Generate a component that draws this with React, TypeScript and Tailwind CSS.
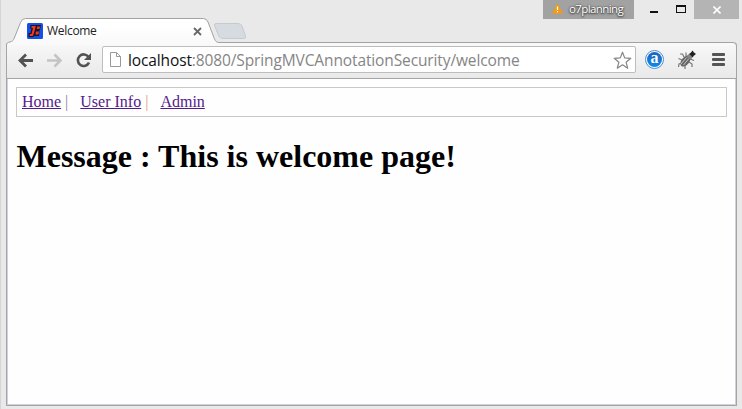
const UI = "font-['Open_Sans','Noto_Sans',sans-serif]";

function TabStrip() {
  return (
    <header className="relative z-10 flex h-[42px] shrink-0 items-start">
      <svg className="pointer-events-none absolute left-0 top-0" width="742" height="46" viewBox="0 0 742 46" fill="none">
        <defs>
          <linearGradient id="tab" x1="0" y1="18" x2="0" y2="46" gradientUnits="userSpaceOnUse">
            <stop offset="0.3" stopColor="#ffffff" />
            <stop offset="1" stopColor="#f8f8f8" />
          </linearGradient>
        </defs>
        <path d="M216 23.5H238Q241 23.5 242 26L245.5 36Q246.500 38.500 243.500 38.500H223Q220 38.500 218.800 36L214.500 25.500Q214 23.500 216 23.500Z" fill="#d6dae1" stroke="#c6c9ce" />
        <path d="M6.500 46V45C6.500 43 8 42.300 10 42C12.500 41.500 13.500 40 14.300 38L20.500 22.500Q22 18.500 25.500 18.500H203.500Q206.500 18.500 208 22L214.300 38.500C215.300 41 216.500 42.500 219 42.500H733Q736.500 42.500 736.500 46" fill="url(#tab)" stroke="#a2a2a2" />
      </svg>
      <div className="relative mt-[19px] flex h-6 w-[204px] items-center pl-[27px]">
        <svg className="shrink-0" width="16" height="16" viewBox="0 0 16 16">
          <rect width="16" height="16" rx="1.500" fill="#1451e6" />
          <path d="M3.500 2H14L13 7H12.500L12 13H7L6.500 14H1.500V10H3.500L4.500 5.500H3Z" fill="#15142e" />
          <path d="M4.500 3H8.800L7 10L5.800 13H2.500L3 11H4.500L6 5H4.500ZM10.200 3.500H13L12.500 6H9.700ZM9 8.500H12L11.400 11.500H8.400Z" fill="#f5391a" />
        </svg>
        <span className={`${UI} ml-1 text-[12px] leading-4 tracking-[-0.300px] text-[#222]`}>Welcome</span>
        <svg className="absolute left-[193px] top-[7.500px]" width="9" height="9" viewBox="0 0 9 9">
          <path d="M1 1L8 8M8 1L1 8" stroke="#686868" strokeWidth="1.800" />
        </svg>
      </div>
      <div className="relative ml-auto flex h-[19px] items-center pr-[3px]">
        <div className="flex h-[19px] w-[91px] items-center bg-[#a2a2a2] pl-[9px]">
          <svg width="11" height="11" viewBox="0 0 11 11" className="-mt-[3px]">
            <path d="M5.500 0.500L11 10.500H0Z" fill="#f39a10" />
            <path d="M5.500 3.500V7M5.500 8V9.300" stroke="#fff" strokeWidth="1.200" />
          </svg>
          <span className={`${UI} -mt-px ml-[6px] text-[11.500px] leading-4 tracking-[-0.600px] text-white [text-shadow:0_0_2px_#333,0_1px_2px_#333]`}>o7planning</span>
        </div>
        <svg width="60" height="19" viewBox="0 0 60 19">
          <path d="M16 11H24V13H16Z" fill="#111" />
          <path d="M42 5H52V13H42ZM43 7V12H51V7Z" fill="#111" fillRule="evenodd" />
        </svg>
        <div className="flex h-[19px] w-[45px] items-center justify-center bg-[#b4b4b4]">
          <svg width="8" height="8" viewBox="0 0 8 8"><path d="M.5 .5L7.500 7.500M7.500 .5L.5 7.500" stroke="#fff" strokeWidth="1.600" /></svg>
        </div>
      </div>
    </header>
  );
}

function Toolbar() {
  return (
    <div className="relative ml-[6px] mr-[5px] flex h-[37px] shrink-0 items-center rounded-t-[4px] border-x border-b border-[#a5a5a5] bg-linear-to-b from-[#f8f8f8] to-[#e9e9e9] pb-px pl-[11px]">
      <svg className="shrink-0" width="84" height="36" viewBox="18 42 84 36" fill="none">
        <path d="M33 60.500H20M26 54.500L20 60.500L26 66.500" stroke="#525252" strokeWidth="2.800" />
        <path d="M47 60.500H60M54.500 54.500L60.500 60.500L54.500 66.500" stroke="#c4c4c4" strokeWidth="2.500" />
        <path d="M88.500 57A5.800 5.800 0 1 0 89 62.500" stroke="#525252" strokeWidth="2.600" />
        <path d="M91 53V60H84Z" fill="#525252" />
      </svg>
      <div className="flex h-[27px] w-[534px] shrink-0 items-center rounded-[2px] border border-[#bdbdbd] bg-white pl-[7px]">
        <svg className="shrink-0" width="11" height="15" viewBox="0 0 11 15" fill="none">
          <path d="M.5 .5H6.500L10.500 4.500V14.500H.5ZM6.500 .5V4.500H10.500" stroke="#999" />
        </svg>
        <span className={`${UI} ml-[7px] whitespace-nowrap text-[15.500px] leading-5 tracking-[-0.120px] text-[#858585]`}>
          <span className="text-[#111]">localhost</span>:8080/SpringMVCAnnotationSecurity/welcome
        </span>
        <svg className="ml-auto mr-[3px] mt-px shrink-0" width="19" height="19" viewBox="0 0 19 19" fill="none">
          <path d="M9.500 1.200L11.700 6.900L17.800 7.300L13.100 11.200L14.700 17.200L9.500 13.800L4.300 17.200L5.900 11.200L1.200 7.300L7.300 6.900Z" stroke="#858585" strokeWidth="1.200" strokeLinejoin="round" />
        </svg>
      </div>
      <div className="ml-[9px] flex size-[19px] shrink-0 items-center justify-center rounded-full border border-[#4a8fd0] bg-white">
        <div className="flex size-[15px] items-center justify-center rounded-full bg-linear-to-b from-[#1f62b8] to-[#0a8af0] font-['Liberation_Serif',serif] text-[16px] font-bold leading-none text-white"><span className="-mt-[3px]">a</span></div>
      </div>
      <svg className="ml-[13px] shrink-0" width="20" height="20" viewBox="0 0 20 20" fill="none">
        <path d="M7 7L5.500 4L3 4M5 10L1.500 8.500M5 13L2 14L1.500 17M8 15L8 19M12 12L15 14L15 17M13 9L17 10.500M9 6L9 2.500" stroke="#777" strokeWidth="1.200" />
        <ellipse cx="8.500" cy="11" rx="3.800" ry="6.500" transform="rotate(40 8.500 11)" fill="#666" />
        <path d="M4 14L9.500 7.500M6.500 15L11.500 9" stroke="#c4c4c4" />
        <circle cx="12.800" cy="6.500" r="2.600" fill="#858585" />
        <path d="M15.500 0.500L17 2.500L19 4L17 5.500L15.500 7.500L14 5.500L12 4L14 2.500Z" fill="#222" />
      </svg>
      <div className="ml-[15px] flex w-[13px] flex-col gap-[2px]">
        <i className="h-[3px] rounded-[1px] bg-[#555]" />
        <i className="h-[3px] rounded-[1px] bg-[#555]" />
        <i className="h-[3px] rounded-[1px] bg-[#555]" />
      </div>
    </div>
  );
}

export default function App() {
  return (
    <div className="flex h-[409px] w-[742px] flex-col overflow-hidden border-l border-[#d5d5d5] bg-[#e9e9e9]">
      <div className="-ml-px flex min-h-0 flex-1 flex-col">
        <TabStrip />
        <Toolbar />
        <main className="ml-[6px] mr-[5px] h-[327px] shrink-0 rounded-b-[1px] border border-t-0 border-[#a2a4a9] bg-[#fefefe] pl-[9px] pr-[9px] pt-2 font-['Liberation_Serif',serif] text-black shadow-[inset_1px_0_#cfd2d8,inset_-1px_-1px_#cfd2d8]">
          <nav className="flex h-[30px] items-start border border-[#c8c8c8] pl-[5px] pt-[5px] text-[16px] leading-[18px] text-[#551a8b]">
            <a className="underline">Home</a><span className="ml-1 text-[#a07fa6]">|</span>
            <a className="ml-3 underline">User Info</a><span className="ml-1 text-[#e0a27c]">|</span>
            <a className="ml-3 underline">Admin</a>
          </nav>
          <h1 className="mt-[21px] pl-[0.500px] text-[32px] font-bold leading-[37px]">Message : This is welcome page!</h1>
        </main>
      </div>
    </div>
  );
}
